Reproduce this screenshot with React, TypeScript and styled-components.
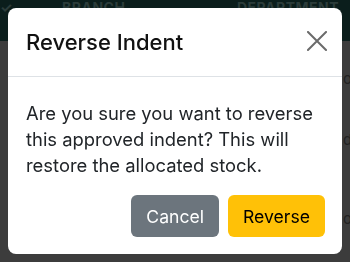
import React from "react";
import styled, { createGlobalStyle } from "styled-components";

const GlobalStyle = createGlobalStyle`
  html, body { margin: 0; padding: 0; }
  body {
    background: #3c3c3c;
    font-family: Inter, "Noto Sans", "Liberation Sans", sans-serif;
    overflow: hidden;
  }
`;

const Page = styled.div`
  width: 350px;
  height: 262px;
  overflow: hidden;
  background: #3c3c3c;
`;

const HeaderRow = styled.div`
  display: grid;
  grid-template-columns: 62px 175px 1fr;
  height: 41px;
  background: #0b1e1c;
  color: #2b3c3a;
  font-size: 14px;
  font-weight: 700;
  letter-spacing: 0.5px;
  white-space: nowrap;
`;

const HeaderCell = styled.div`
  line-height: 16px;
`;

const Row = styled.div<{ $h: number }>`
  height: ${(p) => p.$h}px;
  display: flex;
  align-items: center;
  padding-left: 343px;
  color: #222;
  font-size: 15px;
  white-space: nowrap;
`;

const Modal = styled.div`
  position: fixed;
  top: 8px;
  left: 8px;
  width: 334px;
  background: #fff;
  border-radius: 8px;
  overflow: hidden;
`;

const ModalHeader = styled.div`
  display: flex;
  align-items: center;
  justify-content: space-between;
  padding: 16px 15px 16px 18px;
  border-bottom: 1px solid #dee2e6;
`;

const Title = styled.h5`
  margin: 0;
  font-size: 22px;
  line-height: 36px;
  font-weight: 500;
  color: #111;
`;

const CloseButton = styled.button`
  width: 20px;
  height: 20px;
  padding: 0;
  border: 0;
  background: transparent;
  display: flex;
  margin-top: -2px;
`;

const ModalBody = styled.div`
  padding: 23px 12px 0 18px;
  font-size: 18.4px;
  line-height: 26px;
  color: #212529;
`;

const ModalFooter = styled.div`
  display: flex;
  justify-content: flex-end;
  gap: 9px;
  padding: 17px 17px 17px;
`;

const Button = styled.button<{ $variant: "secondary" | "warning" }>`
  height: 42px;
  padding: 0 15px;
  border: 0;
  border-radius: 6px;
  font-family: Inter, "Noto Sans", "Liberation Sans", sans-serif;
  font-size: 17.6px;
  background: ${(p) => (p.$variant === "secondary" ? "#6c757d" : "#ffc107")};
  color: ${(p) => (p.$variant === "secondary" ? "#fff" : "#000")};
`;

export default function App() {
  return (
    <>
      <GlobalStyle />
      <Page>
        <HeaderRow>
          <HeaderCell>✓</HeaderCell>
          <HeaderCell>BRANCH</HeaderCell>
          <HeaderCell>DEPARTMENT</HeaderCell>
        </HeaderRow>
        <Row $h={74}>o</Row>
        <Row $h={48}>da</Row>
        <Row $h={110}>o</Row>
      </Page>
      <Modal>
        <ModalHeader>
          <Title>Reverse Indent</Title>
          <CloseButton aria-label="Close">
            <svg width="20" height="20" viewBox="0 0 20 20">
              <path d="M1 1 L19 19 M19 1 L1 19" stroke="#6b6b6b" strokeWidth="2" strokeLinecap="square" />
            </svg>
          </CloseButton>
        </ModalHeader>
        <ModalBody>
          Are you sure you want to reverse this approved indent? This will restore the allocated stock.
        </ModalBody>
        <ModalFooter>
          <Button $variant="secondary">Cancel</Button>
          <Button $variant="warning">Reverse</Button>
        </ModalFooter>
      </Modal>
    </>
  );
}
